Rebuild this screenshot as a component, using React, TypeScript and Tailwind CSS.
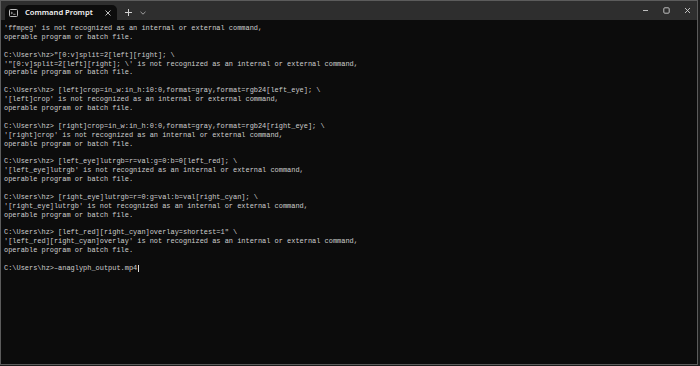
import React from "react";

const LINES = [
  "'ffmpeg' is not recognized as an internal or external command,",
  "operable program or batch file.",
  "",
  'C:\\Users\\hz>"[0:v]split=2[left][right]; \\',
  "'\"[0:v]split=2[left][right]; \\' is not recognized as an internal or external command,",
  "operable program or batch file.",
  "",
  "C:\\Users\\hz> [left]crop=in_w:in_h:10:0,format=gray,format=rgb24[left_eye]; \\",
  "'[left]crop' is not recognized as an internal or external command,",
  "operable program or batch file.",
  "",
  "C:\\Users\\hz> [right]crop=in_w:in_h:0:0,format=gray,format=rgb24[right_eye]; \\",
  "'[right]crop' is not recognized as an internal or external command,",
  "operable program or batch file.",
  "",
  "C:\\Users\\hz> [left_eye]lutrgb=r=val:g=0:b=0[left_red]; \\",
  "'[left_eye]lutrgb' is not recognized as an internal or external command,",
  "operable program or batch file.",
  "",
  "C:\\Users\\hz> [right_eye]lutrgb=r=0:g=val:b=val[right_cyan]; \\",
  "'[right_eye]lutrgb' is not recognized as an internal or external command,",
  "operable program or batch file.",
  "",
  'C:\\Users\\hz> [left_red][right_cyan]overlay=shortest=1" \\',
  "'[left_red][right_cyan]overlay' is not recognized as an internal or external command,",
  "operable program or batch file.",
  "",
];

export default function App() {
  return (
    <div className="w-[700px] h-[366px] bg-[#1c1c1c]">
      <div className="w-[698px] h-[365px] border border-[#5c5c5c] bg-[#0c0c0c] flex flex-col overflow-hidden">
        {/* ── Title bar ── */}
        <div className="h-[19px] shrink-0 bg-[#2e2e2e] flex items-end">
          <div className="ml-[4px] w-[112px] h-[15px] rounded-t-[5px] bg-[#0c0c0c] flex items-center pl-[4px] pr-[6px]">
            <svg width="9" height="8" viewBox="0 0 9 8" className="shrink-0">
              <rect x="0.5" y="0.5" width="8" height="7" rx="1" fill="none" stroke="#bdbdbd" strokeWidth="1" />
              <path d="M2 3 L3.5 4 L2 5" fill="none" stroke="#bdbdbd" strokeWidth="0.8" />
              <path d="M4.2 5.3 H6.5" stroke="#bdbdbd" strokeWidth="0.8" />
            </svg>
            <span className="ml-[7px] text-[7.6px] font-semibold text-[#f2f2f2] font-['Segoe_UI','Noto_Sans',sans-serif] leading-none">
              Command Prompt
            </span>
            <svg width="6" height="6" viewBox="0 0 6 6" className="ml-auto">
              <path d="M0.5 0.5 L5.5 5.5 M5.5 0.5 L0.5 5.5" stroke="#d0d0d0" strokeWidth="0.9" />
            </svg>
          </div>
          <div className="h-[15px] flex items-center ml-[8px] gap-[8px]">
            <svg width="7" height="7" viewBox="0 0 7 7">
              <path d="M3.5 0 V7 M0 3.5 H7" stroke="#d0d0d0" strokeWidth="1" />
            </svg>
            <svg width="6" height="4" viewBox="0 0 6 4">
              <path d="M0.5 0.8 L3 3.2 L5.5 0.8" fill="none" stroke="#bdbdbd" strokeWidth="0.8" />
            </svg>
          </div>
          <div className="ml-auto h-[19px] flex items-center pr-[6px] gap-[14px]">
            <svg width="7" height="7" viewBox="0 0 7 7">
              <path d="M1 3.5 H6" stroke="#cfcfcf" strokeWidth="0.9" />
            </svg>
            <svg width="7" height="7" viewBox="0 0 7 7">
              <rect x="0.8" y="0.8" width="5.4" height="5.4" rx="1" fill="none" stroke="#cfcfcf" strokeWidth="0.9" />
            </svg>
            <svg width="7" height="7" viewBox="0 0 7 7">
              <path d="M1 1 L6 6 M6 1 L1 6" stroke="#cfcfcf" strokeWidth="0.9" />
            </svg>
          </div>
        </div>

        {/* ── Console ── */}
        <div className="pt-[4px] pl-[3px] font-['Liberation_Mono',monospace] text-[6.95px] leading-[8.9px] text-[#cccccc] whitespace-pre">
          {LINES.map((l, i) => (
            <div key={i} className="h-[8.9px]">
              {l}
            </div>
          ))}
          <div className="h-[8.9px] flex items-center">
            <span>{"C:\\Users\\hz>–anaglyph_output.mp4"}</span>
            <span className="inline-block w-[1px] h-[7px] bg-[#e0e0e0] ml-[1px]" />
          </div>
        </div>
      </div>
    </div>
  );
}
